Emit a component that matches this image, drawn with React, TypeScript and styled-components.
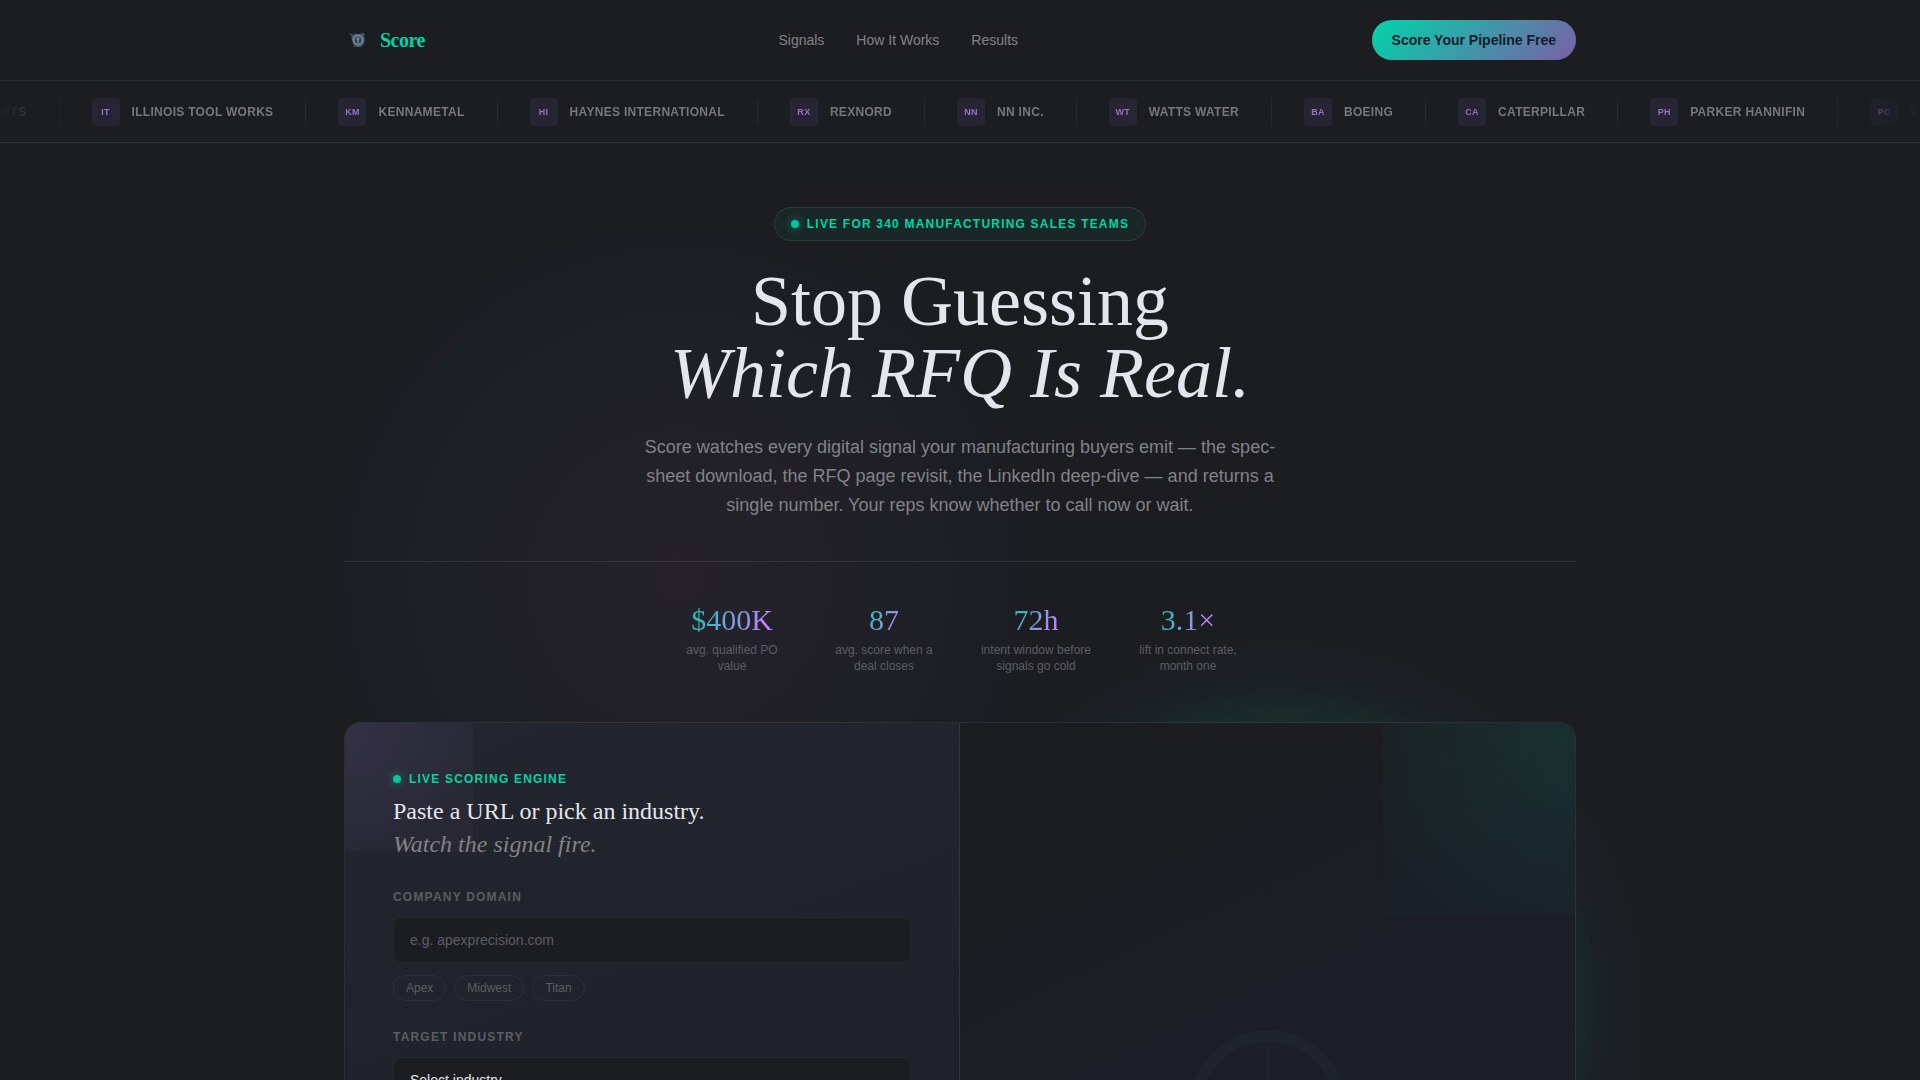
import React from "react";
import styled, { createGlobalStyle } from "styled-components";

const sans = `"Liberation Sans", Arial, sans-serif`;
const serif = `"Liberation Serif", "Times New Roman", serif`;

const c = {
  bg: "#1c1d21",
  line: "rgba(255, 255, 255, 0.08)",
  text: "#e5e5ed",
  muted: "#828287",
  dim: "#5c5d64",
  green: "#00d4a4",
  purple: "#c77dff",
};

const GlobalStyle = createGlobalStyle`
  *, *::before, *::after { box-sizing: border-box; }
  body { margin: 0; background: ${c.bg}; color: ${c.text}; font-family: ${sans}; }
`;

const Page = styled.div`
  position: relative;
  height: 100vh;
  overflow: hidden;
  background: ${c.bg};
`;

const Container = styled.div`
  width: 100%;
  max-width: 1280px;
  margin: 0 auto;
  padding: 0 24px;
`;

const Header = styled.header`
  border-bottom: 1px solid ${c.line};
`;

const Bar = styled(Container)`
  display: flex;
  align-items: center;
  justify-content: space-between;
  height: 80px;
`;

const Brand = styled.a`
  display: flex;
  align-items: center;
  gap: 8px;
  color: ${c.green};
  font: bold 20px/28px ${serif};
  letter-spacing: -0.025em;
  text-decoration: none;
`;

const Nav = styled.nav`
  display: flex;
  gap: 32px;
`;

const NavLink = styled.a`
  color: ${c.muted};
  font-size: 14px;
  line-height: 20px;
  text-decoration: none;
`;

const Cta = styled.button`
  padding: 10px 20px;
  border: 0;
  border-radius: 20px;
  background: linear-gradient(135deg, #00d4aa, #7b5ea7);
  color: #111d2b;
  font: bold 14px/20px ${sans};
  cursor: pointer;
`;

const Ticker = styled.section`
  overflow: hidden;
  padding: 16px 0;
  border-top: 1px solid transparent;
  border-bottom: 1px solid ${c.line};
`;

const TickerWindow = styled.div`
  display: flex;
  overflow: hidden;
  mask-image: linear-gradient(90deg, transparent, #000 5%, #000 95%, transparent);
`;

const Track = styled.ul`
  display: flex;
  flex: none;
  margin: 0 0 0 -193px;
  padding: 0;
  list-style: none;
`;

const Company = styled.li`
  display: flex;
  flex: none;
  align-items: center;
  gap: 12px;
  padding: 0 32px;
  border-right: 1px solid rgba(255, 255, 255, 0.05);
  color: #77777c;
  font-size: 12px;
  font-weight: bold;
  line-height: 16px;
  letter-spacing: 0.025em;
  text-transform: uppercase;
`;

const Initials = styled.span`
  display: grid;
  place-items: center;
  width: 28px;
  height: 28px;
  border-radius: 4px;
  background: #272434;
  color: #9274c4;
  font-size: 9px;
`;

const Hero = styled.section`
  position: relative;
  z-index: 1;
  padding-top: 64px;
`;

const Intro = styled(Container)`
  display: flex;
  flex-direction: column;
  align-items: center;
  text-align: center;
`;

const Live = styled.div<{ $pill?: boolean }>`
  display: flex;
  align-items: center;
  gap: 8px;
  color: ${c.green};
  font-size: 12px;
  font-weight: bold;
  line-height: 16px;
  letter-spacing: 0.1em;
  text-transform: uppercase;
  ${(p) =>
    p.$pill &&
    `
    padding: 8px 16px;
    border: 1px solid rgba(150, 212, 194, 0.12);
    border-radius: 20px;
    background: rgba(0, 212, 164, 0.06);
  `}
`;

const Dot = styled.span`
  width: 8px;
  height: 8px;
  border-radius: 50%;
  background: #00c79b;
  box-shadow: 0 0 8px rgba(0, 212, 164, 0.6);
`;

const Title = styled.h1`
  margin: 24px 0;
  font: normal 72px/72px ${serif};

  em {
    display: block;
  }
`;

const Lead = styled.p`
  max-width: 640px;
  margin: 0 0 41px;
  color: ${c.muted};
  font-size: 18px;
  line-height: 29px;
`;

const Stats = styled.dl`
  display: flex;
  justify-content: center;
  gap: 40px;
  width: 100%;
  margin: 0;
  padding: 40px 0 48px;
  border-top: 1px solid ${c.line};
`;

const Stat = styled.div`
  display: flex;
  flex-direction: column-reverse;
  align-items: center;
  justify-content: flex-end;
  gap: 4px;
  width: 112px;

  dt {
    color: ${c.dim};
    font-size: 12px;
    line-height: 16px;
  }

  dd {
    margin: 0;
    background: linear-gradient(115deg, #14c8a8, ${c.purple} 90%);
    background-clip: text;
    color: transparent;
    font: 30px/36px ${serif};
  }
`;

const Card = styled.div`
  display: grid;
  grid-template-columns: 1fr 1fr;
  min-height: 776px;
  overflow: hidden;
  border: 1px solid rgba(255, 255, 255, 0.08);
  border-radius: 16px;
`;

const FormPanel = styled.form`
  padding: 48px;
  border-right: 1px solid #33343d;
  background:
    radial-gradient(circle at 0 0, rgba(123, 94, 167, 0.2), rgba(123, 94, 167, 0.07) 128px) 0 0 / 128px 128px no-repeat,
    linear-gradient(160deg, #23262e, #1c1f27);
`;

const ResultPanel = styled.div`
  display: grid;
  place-items: center;
  background:
    radial-gradient(circle at 100% 0, rgba(0, 212, 164, 0.1), rgba(0, 140, 164, 0.02) 230px) 100% 0 / 192px 192px no-repeat,
    linear-gradient(155deg, #1c1d20 15%, #1b1e26 40%, #1c1f27);
`;

const FormTitle = styled.h2`
  margin: 8px 0 28px;
  font: normal 24px/33px ${serif};

  em {
    display: block;
    color: ${c.muted};
  }
`;

const Label = styled.label`
  display: block;
  margin-bottom: 12px;
  color: ${c.dim};
  font-size: 12px;
  font-weight: bold;
  line-height: 16px;
  letter-spacing: 0.1em;
  text-transform: uppercase;
`;

const field = `
  display: block;
  width: 100%;
  height: 46px;
  padding: 0 16px;
  border: 1px solid #26282e;
  border-radius: 8px;
  background: ${c.bg};
  color: ${c.text};
  font: 14px/20px ${sans};
`;

const TextField = styled.input`
  ${field}
  &::placeholder { color: ${c.dim}; opacity: 1; }
`;

const SelectField = styled.select`
  ${field}
  appearance: none;
`;

const Chips = styled.div`
  display: flex;
  gap: 8px;
  margin: 12px 0 28px;
`;

const Chip = styled.button`
  padding: 4px 12px;
  border: 1px solid #2d3039;
  border-radius: 13px;
  background: transparent;
  color: ${c.dim};
  font: 12px/16px ${sans};
  cursor: pointer;
`;

const Glow = styled.div<{ $x: string; $y: string; $size: number; $paint: string }>`
  position: absolute;
  left: ${(p) => p.$x};
  top: ${(p) => p.$y};
  width: ${(p) => p.$size}px;
  height: ${(p) => p.$size}px;
  background: ${(p) => p.$paint};
  pointer-events: none;
`;

const companies: [string, string][] = [
  ["PC", "Precision Castparts"],
  ["IT", "Illinois Tool Works"],
  ["KM", "Kennametal"],
  ["HI", "Haynes International"],
  ["RX", "Rexnord"],
  ["NN", "NN Inc."],
  ["WT", "Watts Water"],
  ["BA", "Boeing"],
  ["CA", "Caterpillar"],
  ["PH", "Parker Hannifin"],
  ["PC", "Precision Castparts"],
];

const stats: [string, string][] = [
  ["$400K", "avg. qualified PO value"],
  ["87", "avg. score when a deal closes"],
  ["72h", "intent window before signals go cold"],
  ["3.1×", "lift in connect rate, month one"],
];

const Mark = () => (
  <svg width="28" height="28" viewBox="0 0 28 28" aria-hidden="true">
    <path d="M5 7l5 2 1-2 1 1h4l2-1 3 1-1 3 1 2-1 5-3 3h-5l-3-3v-3l-2-3 1-1z" fill="#46545c" />
    <circle cx="14" cy="14" r="4.6" fill="#34405a" stroke="#64848a" strokeWidth="2.2" />
    <path d="M14 11v6M12.4 13h3.2" stroke="#8a6cc0" strokeWidth="1.6" />
    <path d="M10 19l-1 3 3-2" fill="#39424b" />
  </svg>
);

const Gauge = () => (
  <svg width="160" height="160" viewBox="0 0 160 160" fill="none" aria-hidden="true">
    <circle cx="80" cy="80" r="74" stroke="#1f232b" strokeWidth="12" />
    <path d="M80 17v63" stroke="#1f232b" strokeWidth="3" />
  </svg>
);

export default function App() {
  return (
    <Page>
      <GlobalStyle />
      <Glow
        $x="calc(50% - 640px)"
        $y="220px"
        $size={720}
        $paint="radial-gradient(closest-side, rgba(140, 90, 150, 0.08), rgba(110, 85, 160, 0.05) 55%, rgba(30, 50, 130, 0.05) 85%, transparent)"
      />
      <Glow
        $x="calc(50% - 50px)"
        $y="636px"
        $size={740}
        $paint="radial-gradient(closest-side, rgba(0, 212, 140, 0.13), rgba(0, 200, 140, 0.09) 76%, rgba(10, 100, 140, 0.05) 88%, transparent)"
      />
      <Header>
        <Bar>
          <Brand href="#top">
            <Mark />
            Score
          </Brand>
          <Nav>
            <NavLink href="#signals">Signals</NavLink>
            <NavLink href="#how">How It Works</NavLink>
            <NavLink href="#results">Results</NavLink>
          </Nav>
          <Cta type="button">Score Your Pipeline Free</Cta>
        </Bar>
      </Header>
      <Ticker>
        <TickerWindow>
          <Track>
            {companies.map(([initials, name], i) => (
              <Company key={i}>
                <Initials>{initials}</Initials>
                {name}
              </Company>
            ))}
          </Track>
        </TickerWindow>
      </Ticker>
      <Hero>
        <Intro>
          <Live $pill>
            <Dot />
            Live for 340 manufacturing sales teams
          </Live>
          <Title>
            Stop Guessing
            <em>Which RFQ Is Real.</em>
          </Title>
          <Lead>
            Score watches every digital signal your manufacturing buyers emit — the spec-sheet
            download, the RFQ page revisit, the LinkedIn deep-dive — and returns a single number.
            Your reps know whether to call now or wait.
          </Lead>
          <Stats>
            {stats.map(([value, label]) => (
              <Stat key={value}>
                <dt>{label}</dt>
                <dd>{value}</dd>
              </Stat>
            ))}
          </Stats>
        </Intro>
        <Container>
          <Card>
            <FormPanel>
              <Live>
                <Dot />
                Live scoring engine
              </Live>
              <FormTitle>
                Paste a URL or pick an industry.
                <em>Watch the signal fire.</em>
              </FormTitle>
              <Label htmlFor="domain">Company domain</Label>
              <TextField id="domain" type="text" placeholder="e.g. apexprecision.com" />
              <Chips>
                <Chip type="button">Apex</Chip>
                <Chip type="button">Midwest</Chip>
                <Chip type="button">Titan</Chip>
              </Chips>
              <Label htmlFor="industry">Target industry</Label>
              <SelectField id="industry" defaultValue="">
                <option value="">Select industry...</option>
              </SelectField>
            </FormPanel>
            <ResultPanel>
              <Gauge />
            </ResultPanel>
          </Card>
        </Container>
      </Hero>
    </Page>
  );
}
